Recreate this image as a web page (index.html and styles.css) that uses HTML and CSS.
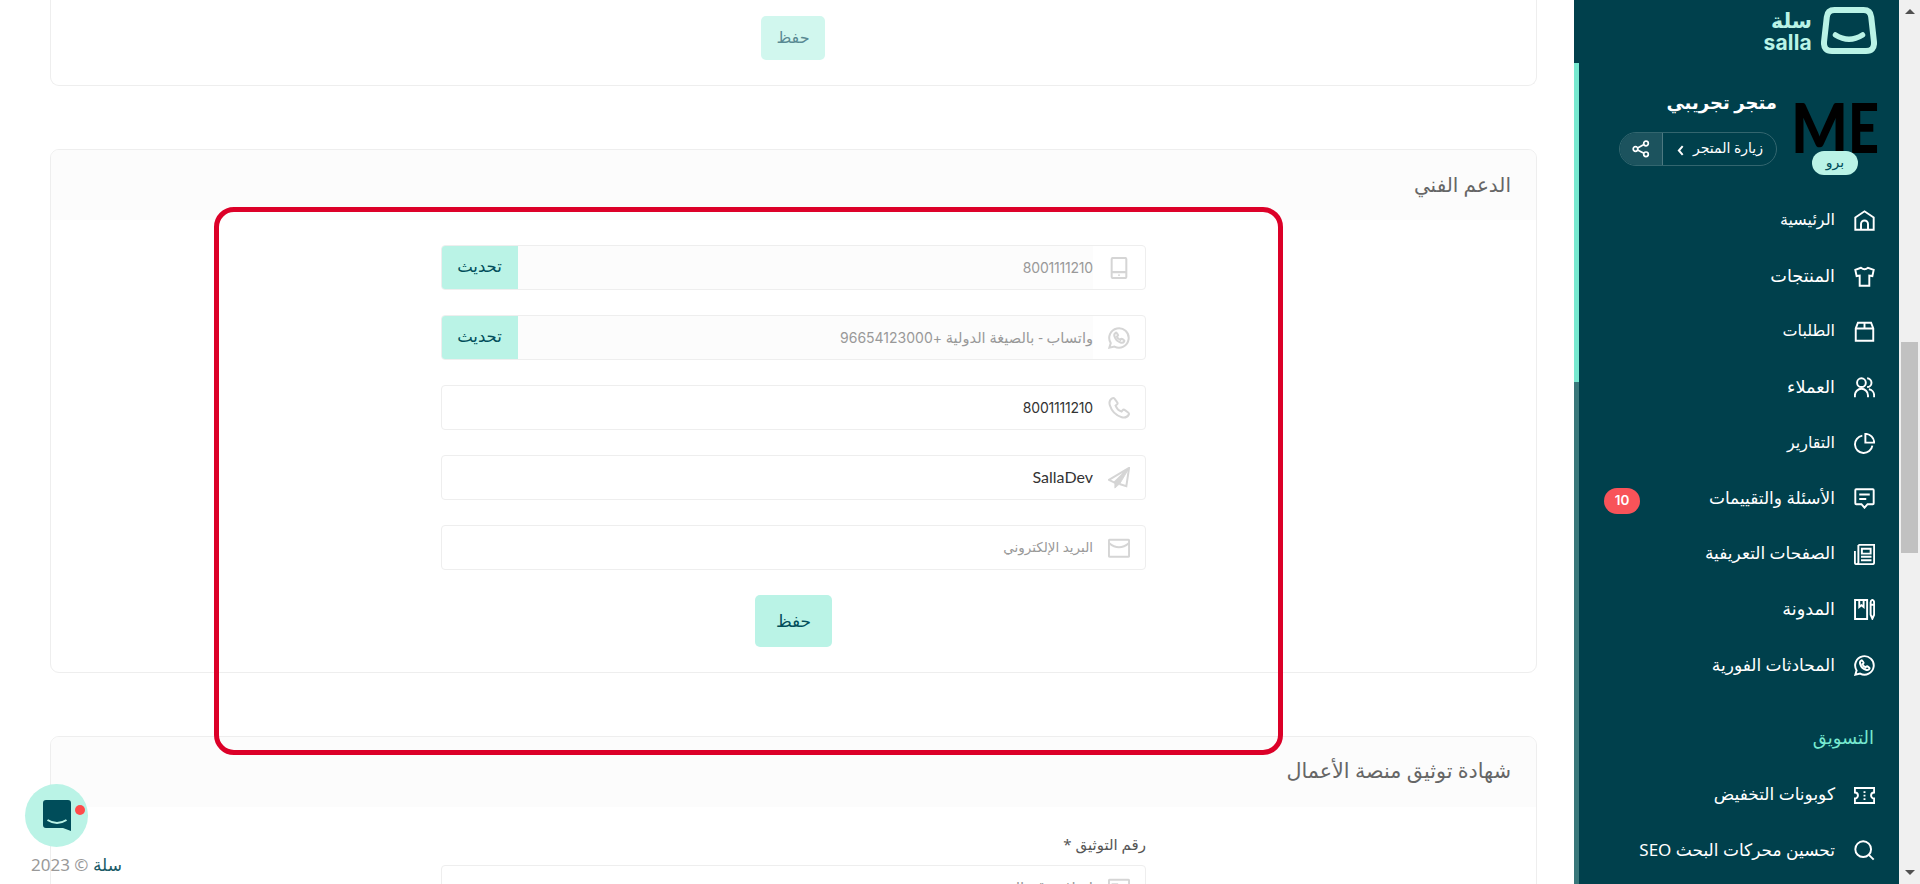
FILE: index.html
```html
<!DOCTYPE html>
<html lang="ar">
<head>
<meta charset="utf-8">
<title>سلة</title>
<link rel="stylesheet" href="styles.css">
</head>
<body>
<svg width="0" height="0" class="defs">
  <symbol id="whatsapp" viewBox="0 0 24 24"><path d="M1.500 22.500 3 17.600A10.600 10.600 0 1 1 7 21.300Z"/><path d="M8.300 6.300c-1.500.9-1.800 2.300-1.200 4.100 1 3.100 3.400 5.500 6.500 6.500 1.800.6 3.200.3 4.100-1.200.3-.5.2-.9-.2-1.200l-2-1.500c-.5-.4-.9-.3-1.300.1l-.8 1c-1.700-.7-3-2-3.700-3.700l1-.8c.4-.4.5-.8.1-1.300l-1.500-2c-.3-.4-.6-.4-1 0Z"/></symbol>
</svg>
<div class="page" dir="rtl">
  <div class="scrollbar" dir="ltr"><i class="arrow up"></i><i class="thumb"></i><i class="arrow down"></i></div>
  <aside class="sidebar">
    <div class="brand">
      <svg class="brand-mark" viewBox="0 0 56 47"><path d="M13.500 3h29q7 0 7.700 7l2.800 25q.6 9-8 9H11q-8.600 0-8-9L5.800 10q.7-7 7.700-7Z" fill="none" stroke="#baf3e6" stroke-width="6"/><path d="M14.500 28q13.500 8.500 27 0" fill="none" stroke="#baf3e6" stroke-width="5.500" stroke-linecap="round"/></svg>
      <div class="brand-name"><b class="brand-ar">سلة</b><b class="brand-en">salla</b></div>
    </div>
    <div class="store">
      <div class="avatar">
        <svg viewBox="0 0 82 50"><text class="me" x="-4" y="50" textLength="57" lengthAdjust="spacingAndGlyphs">M</text><text class="me" x="53" y="50" textLength="31" lengthAdjust="spacingAndGlyphs">E</text></svg>
        <span class="plan">برو</span>
      </div>
      <div class="store-info">
        <div class="store-name">متجر تجريبي</div>
        <div class="visit"><span class="visit-link">زيارة المتجر<svg viewBox="0 0 6 10"><path d="M5 1 1.500 5 5 9"/></svg></span><span class="share"><svg viewBox="0 0 18 18"><circle cx="3.500" cy="9" r="2.300"/><circle cx="14" cy="3.500" r="2.300"/><circle cx="14" cy="14.300" r="2.300"/><path d="m5.600 8 6.300-3.400M5.600 10l6.300 3.300"/></svg></span></div>
      </div>
    </div>
    <nav class="menu">
      <a><svg viewBox="0 0 24 24"><path d="M1.500 8.500 12 1.500l10.500 7v14h-21ZM8 22v-6a4 4 0 0 1 8 0v6"/></svg><span class="snug">الرئيسية</span></a>
      <a><svg viewBox="0 0 24 24"><path d="M8 2 1.500 4.500l1.500 7 3.500-.5v11.500h11V11l3.500.5 1.500-7L16 2q-4 3.500-8 0Z"/></svg><span class="wide">المنتجات</span></a>
      <a><svg viewBox="0 0 24 24"><path d="M2 8.500 4.500 2h15L22 8.500v14H2ZM2 8.500h20M12 2v6.500"/></svg><span class="snug">الطلبات</span></a>
      <a><svg viewBox="0 0 24 24"><circle cx="8.500" cy="6.500" r="5"/><path d="M1 23v-2a7.500 7.500 0 0 1 15 0v2M15 1.500a5 5 0 0 1 0 10M17 14a7 7 0 0 1 6 7v2"/></svg><span class="wide">العملاء</span></a>
      <a><svg viewBox="0 0 24 24"><path d="M9.500 3A10 10 0 1 0 21 14.500"/><path d="M13 1v10h10A10 10 0 0 0 13 1Z"/></svg><span class="snug">التقارير</span></a>
      <a><svg viewBox="0 0 24 24"><path d="M2.500 1.500h19q1 0 1 1v15q0 1-1 1h-6L12 22.500l-3.500-4h-6q-1 0-1-1v-15q0-1 1-1ZM6 7.500h12M6 12.500h8"/></svg><span>الأسئلة والتقييمات</span><em>10</em></a>
      <a><svg viewBox="0 0 24 24"><path d="M5 1h18v20q0 2-2 2H3q-2 0-2-2V8M5 1v20q0 2-2 2M9 5.500h10V11H9ZM8 14.500h12M8 18.500h12"/></svg><span>الصفحات التعريفية</span></a>
      <a><svg viewBox="0 0 24 24"><path d="M1.200 1.200H15v21.600H1.200ZM6 1v8l2.500-2L11 9V1M21 1q2 .5 2 3v14l-2 4.500-2-4.500V4q0-2.500 2-3ZM19 6.500h4"/></svg><span class="wide">المدونة</span></a>
      <a><svg><use href="#whatsapp"/></svg><span>المحادثات الفورية</span></a>
    </nav>
    <h3 class="menu-title">التسويق</h3>
    <nav class="menu">
      <a><svg viewBox="0 0 24 24"><path d="M1 3.500h22v5a3.500 3.500 0 0 0 0 7v5H1v-5a3.500 3.500 0 0 0 0-7Z"/><path d="M12 7v11" stroke-dasharray="2 2"/></svg><span>كوبونات التخفيض</span></a>
      <a><svg viewBox="0 0 24 24"><circle cx="10.500" cy="10.500" r="9"/><path d="m17 17 5.500 5.500"/></svg><span>تحسين محركات البحث SEO</span></a>
    </nav>
    <div class="side-track"><i></i></div>
  </aside>
  <main class="content">
    <section class="card card-top"><button class="btn btn-faded">حفظ</button></section>
    <section class="card">
      <h2>الدعم الفني</h2>
      <div class="form">
        <div class="field locked"><svg viewBox="0 0 24 24"><rect x="4" y="1" width="16" height="22" rx="1.500"/><path d="M4 16.500h16M12 19v1.500"/></svg><span class="value number">8001111210</span><button>تحديث</button></div>
        <div class="field locked"><svg><use href="#whatsapp"/></svg><span class="value whats">واتساب - بالصيغة الدولية <bdi class="number">96654123000+</bdi></span><button>تحديث</button></div>
        <div class="field"><svg viewBox="0 0 24 24"><path d="M4.500 1.500C2 3 1 5.500 2 9c2 6.500 6.500 11 13 13 3.500 1 6 0 7.500-2.500.6-1 .3-2-.5-2.600L18.500 14.300c-1-.8-2-.6-2.700.2l-1 1.300c-3-1-5.300-3.300-6.500-6.500l1.400-1.100c.8-.7 1-1.700.2-2.700L7.300 2C6.500 1.100 5.500.900 4.500 1.500Z"/></svg><span class="value dark number">8001111210</span></div>
        <div class="field"><svg viewBox="0 0 24 24"><path d="M23 1 1 14l6 3L23 1l-3 20-7.500-2.500"/><path d="M7.500 17v6l5.500-5L22 3Z" fill="#d5d5d5" stroke-width="1"/></svg><span class="value dark latin">SallaDev</span></div>
        <div class="field"><svg viewBox="0 0 24 24"><rect x="1" y="3" width="22" height="18.500" rx="1"/><path d="M1 6.500q11 9.500 22 0"/></svg><span class="value email">البريد الإلكتروني</span></div>
        <button class="btn">حفظ</button>
      </div>
    </section>
    <section class="card card-last">
      <h2>شهادة توثيق منصة الأعمال</h2>
      <div class="form">
        <label>رقم التوثيق *</label>
        <div class="field"><svg viewBox="0 0 24 24"><rect x="1" y="3" width="22" height="18.500" rx="1"/><path d="M5 8h5v5H5z"/></svg><span class="value">إضافة رقم التوثيق</span></div>
      </div>
    </section>
  </main>
  <div class="highlight"></div>
  <div class="chat"><svg viewBox="0 0 28 31"><path d="M3 0h22q3 0 3 3v28l-8-3H3q-3 0-3-3V3q0-3 3-3Z" fill="#004d5a"/><path d="M4.500 20q9.500 6 19 0" fill="none" stroke="#baf3e6" stroke-width="2"/></svg><i></i></div>
  <div class="copyright"><b>سلة</b> © 2023</div>
</div>
</body>
</html>
```
FILE: styles.css
```css
* { box-sizing: border-box; }
body { margin: 0; background: #fff; font-family: "Noto Sans", "DejaVu Sans", sans-serif; }
button { font: inherit; border: 0; padding: 0; }
.defs { position: absolute; }
.page { position: relative; display: flex; width: 1920px; height: 884px; overflow: hidden; }
.scrollbar { flex: none; width: 21px; background: #f0f0f0; display: flex; flex-direction: column; align-items: center; padding: 9px 0; }
.arrow { border: 5px solid transparent; width: 0; height: 0; }
.up { border-bottom-color: #505050; border-top: 0; }
.down { border-top-color: #505050; border-bottom: 0; margin-top: auto; }
.thumb { width: 17px; height: 211px; margin-top: 328px; background: #c1c1c1; }

.sidebar { position: relative; flex: none; width: 325px; background: #00404c; color: #fff; overflow: hidden; }
.side-track { position: absolute; left: 0; top: 63px; bottom: 0; width: 5px; background: #38777a; }
.side-track i { display: block; height: 319px; background: #77e9d0; }
.brand { display: flex; padding: 7px 22px 0; height: 63px; gap: 9px; color: #baf3e6; }
.brand-mark { width: 56px; height: 47px; }
.brand-name { display: flex; flex-direction: column; }
.brand-ar { font-size: 20.500px; line-height: 26px; }
.brand-en { font: 700 21px/20px Inter, sans-serif; letter-spacing: .2px; direction: ltr; }
.store { display: flex; padding: 22px 22px 0; gap: 18px; height: 130px; }
.avatar { position: relative; width: 82px; padding-top: 18px; }
.avatar > svg { display: block; width: 82px; height: 50px; direction: ltr; overflow: visible; }
.me { font: 900 69px Lato, sans-serif; }
.plan { position: absolute; left: 17px; top: 66px; width: 46px; height: 24px; border-radius: 12px; background: #baf3e6; color: #004d5a; font-size: 14px; line-height: 21px; text-align: center; }
.store-name { font-size: 18px; font-weight: 600; line-height: 35px; height: 38px; white-space: nowrap; }
.visit { display: flex; width: 158px; height: 34px; margin-top: 9px; border: 1px solid #33666f; border-radius: 17px; overflow: hidden; }
.visit-link { flex: 1; display: flex; align-items: center; justify-content: space-between; padding: 0 13px 3px 14px; font-size: 14px; white-space: nowrap; }
.visit-link svg { width: 7px; height: 11px; fill: none; stroke: #fff; stroke-width: 1.800; margin-top: 6px; }
.share { width: 43px; background: #1c535e; border-right: 1px solid #4d7981; display: grid; place-items: center; }
.share svg { width: 18px; height: 18px; fill: none; stroke: #fff; stroke-width: 1.700; }
.menu a { display: flex; align-items: center; height: 55.600px; padding: 0 24px 0 30px; font-size: 17px; white-space: nowrap; }
.menu svg { width: 21px; height: 21px; margin-left: 19px; fill: none; stroke: #fff; stroke-width: 2.200; flex: none; }
.menu span { margin-bottom: 3px; }
.menu .snug { font-size: 16px; }
.menu .wide { font-size: 17.700px; }
.menu em { margin-right: auto; width: 36px; height: 26px; border-radius: 13px; background: #f85359; font: 600 13.500px/24px Inter, sans-serif; text-align: center; margin-top: 4px; }
.menu-title { margin: 0; padding: 0 25px; height: 74px; line-height: 88px; font-size: 18px; font-weight: 400; color: #77e9d0; }

.content { flex: 1; padding: 0 37px 0 50px; }
.card { height: 524px; margin-bottom: 63px; border: 1px solid #eee; border-radius: 9px; overflow: hidden; background: #fff; }
.card-top { height: 86px; border-top: 0; border-radius: 0 0 9px 9px; padding-top: 16px; }
.card h2 { margin: 0; height: 70px; padding: 0 25px; background: #fcfcfc; color: #666; font-size: 20px; font-weight: 400; line-height: 69px; }
.card-last h2 { font-size: 20.700px; line-height: 67px; }
.form { width: 705px; margin-right: 390px; padding-top: 25px; }
.field { display: flex; align-items: center; height: 45px; margin-bottom: 25px; border: 1px solid #eee; border-radius: 4px; overflow: hidden; background: #fff; }
.field svg { width: 22px; height: 22px; margin: 0 15px; flex: none; fill: none; stroke: #d5d5d5; stroke-width: 2.200; }
.value { flex: 1; height: 100%; line-height: 42px; font-size: 15px; color: #999; white-space: nowrap; }
.number { font-family: Inter, sans-serif; font-size: 14px; letter-spacing: -.2px; }
.value.number { line-height: 44px; }
.whats { font-size: 14.600px; }
.dark { color: #333; }
.latin { font-family: Lato, sans-serif; font-size: 16px; line-height: 42px; }
.email { font-size: 13.500px; }
.locked .value { background: #fcfcfc; }
.field button { width: 77px; height: 45px; margin-left: -1px; padding-bottom: 4px; background: #baf3e6; color: #004d5a; font-size: 16.500px; }
.btn { display: block; width: 77px; height: 52px; margin: 0 auto; padding-bottom: 2px; border-radius: 5px; background: #baf3e6; color: #004d5a; font-size: 17px; }
.btn-faded { width: 64px; height: 44px; margin: 0 711px 0 0; opacity: .65; font-size: 16px; }
.form label { display: block; height: 33px; line-height: 25px; color: #555; font-size: 15px; }

.highlight { position: absolute; left: 214px; top: 207px; width: 1069px; height: 548px; border: 5px solid #dc0028; border-radius: 20px; }
.chat { position: absolute; left: 25px; top: 784px; width: 63px; height: 63px; border-radius: 50%; background: #baf3e6; }
.chat svg { position: absolute; left: 18px; top: 16px; width: 28px; height: 31px; }
.chat i { position: absolute; left: 50px; top: 21px; width: 10px; height: 10px; border-radius: 50%; background: #ff4b4b; }
.copyright { position: absolute; left: 31px; top: 852px; font-size: 17px; line-height: 26px; color: #999; }
.copyright b { font-weight: 400; color: #1b5a66; }
```
